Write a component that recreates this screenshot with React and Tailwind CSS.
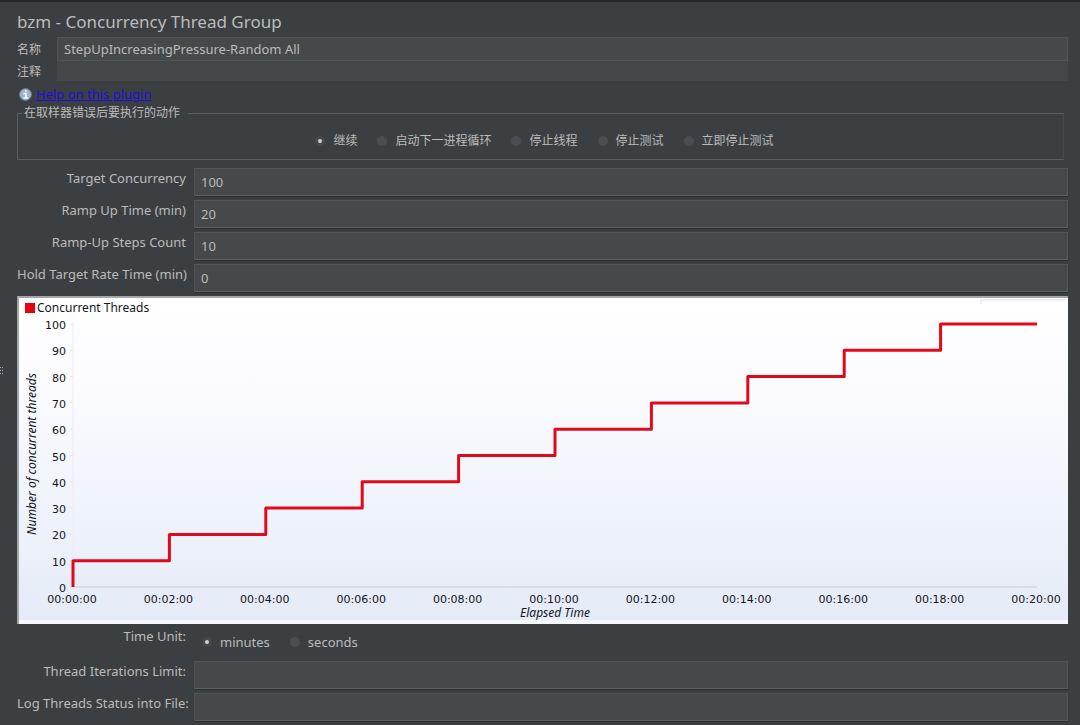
import React, { useState } from "react";

const errorActions = [
  { value: "continue", label: "继续" },
  { value: "startnextloop", label: "启动下一进程循环" },
  { value: "stopthread", label: "停止线程" },
  { value: "stoptest", label: "停止测试" },
  { value: "stoptestnow", label: "立即停止测试" },
];

const fieldClass =
  "w-full min-w-0 bg-[#45494a] border border-[#505556] px-1.5 text-[13px] text-[#bbbbbb] outline-none";

const Radio = ({ name, value, label, checked, onChange }) => (
  <label className="flex items-center gap-2">
    <input
      type="radio"
      name={name}
      value={value}
      checked={checked}
      onChange={() => onChange(value)}
      className="appearance-none size-2.5 rounded-full bg-[#4a4e51] checked:border-3 checked:border-[#45494c] checked:bg-[#d0d0d0]"
    />
    <span>{label}</span>
  </label>
);

const FieldRow = ({ id, label, value, onChange }) => (
  <div className="grid grid-cols-[171px_1fr] gap-1.5 h-8 text-[13px]">
    <label htmlFor={id} className="text-right whitespace-nowrap pt-0.5 pr-0.5 leading-4">
      {label}
    </label>
    <input
      id={id}
      type="text"
      value={value}
      onChange={(e) => onChange(e.target.value)}
      className={`${fieldClass} h-7 border-b-[#5c6062] shadow-[0_1px_1px_#2d2f31]`}
    />
  </div>
);

// Plot area inside the 1051 x 328 chart
const plot = { left: 56, right: 1020, top: 28, bottom: 291 };

const ThreadsChart = ({ target, minutes, steps }) => {
  const x = (m) => plot.left + ((plot.right - plot.left) * m) / minutes;
  const y = (n) => plot.bottom - ((plot.bottom - plot.top) * n) / target;

  let path = `M${x(0)} ${y(0)}`;
  for (let i = 1; i <= steps; i++) {
    path += ` V${y((target / steps) * i)} H${x((minutes / steps) * i)}`;
  }

  const ticks = Array.from({ length: 11 }, (_, i) => i);

  return (
    <svg viewBox="0 0 1051 328" className="block w-full" fontSize="12" fill="#15151c">
      <defs>
        <linearGradient id="chartBg" x1="0" y1="0" x2="0" y2="1">
          <stop offset="0" stopColor="#ffffff" />
          <stop offset="0.25" stopColor="#fcfcff" />
          <stop offset="1" stopColor="#e4ebf7" />
        </linearGradient>
      </defs>
      <rect width="1051" height="328" fill="url(#chartBg)" />
      <path d="M1 328V1H1051" fill="none" stroke="#a4a7a9" strokeWidth="2" />
      <path d="M2 326H1051" stroke="#f6f8fd" strokeWidth="4" />
      <path d="M964 8V4H1048" fill="none" stroke="#dddde2" />

      <rect x="8" y="7" width="10" height="10" fill="#e60012" />
      <text x="20" y="16">Concurrent Threads</text>

      <g fontSize="11" className="font-['DejaVu_Sans',sans-serif]">
        {ticks.map((i) => (
          <g key={i}>
            <path d={`M${plot.left - 3} ${y(i * 10)}h3`} stroke="#e0e2ea" />
            <text x="49" y={y(i * 10) + 5} textAnchor="end">{i * 10}</text>
            <text x={x(i * 2) - 1} y="307" textAnchor="middle">
              {`00:${String(i * 2).padStart(2, "0")}:00`}
            </text>
          </g>
        ))}
      </g>
      <path d={`M${plot.left} ${plot.top}V${plot.bottom}`} stroke="#eceef4" />
      <path d={`M${plot.left} ${plot.bottom}H${plot.right}`} stroke="#c9ccd6" />
      <path d={path} fill="none" stroke="#e00a1c" strokeWidth="3" strokeLinejoin="round" />

      <text x="538" y="321" textAnchor="middle" fontStyle="italic">Elapsed Time</text>
      <text transform="translate(19 158) rotate(-90)" textAnchor="middle" fontStyle="italic">
        Number of concurrent threads
      </text>
    </svg>
  );
};

const App = () => {
  const [name, setName] = useState("StepUpIncreasingPressure-Random All");
  const [comments, setComments] = useState("");
  const [action, setAction] = useState("continue");
  const [concurrency, setConcurrency] = useState("100");
  const [rampUp, setRampUp] = useState("20");
  const [steps, setSteps] = useState("10");
  const [hold, setHold] = useState("0");
  const [unit, setUnit] = useState("minutes");
  const [iterations, setIterations] = useState("");
  const [logFile, setLogFile] = useState("");

  return (
    <div className="relative min-h-screen overflow-hidden bg-[#3c3f41] border-t-2 border-[#26282a] pl-[17px] pr-3 text-xs text-[#bbbbbb] font-['Noto_Sans','Noto_Sans_CJK_SC',sans-serif]">
      {/* Splitter grip */}
      <svg className="absolute left-0 top-[364px]" width="4" height="12" fill="#a9acad">
        <path d="M0 1h1v1H0zM2 1h1v1H2zM0 4h1v1H0zM2 4h1v1H2zM0 7h1v1H0zM2 7h1v1H2z" />
      </svg>

      <h1 className="pt-2 h-[35px] text-[17px] leading-6">bzm - Concurrency Thread Group</h1>

      <div className="grid grid-cols-[30px_1fr] gap-x-2.5 items-center">
        <label htmlFor="name" className="pt-0.5">名称</label>
        <input id="name" type="text" value={name} onChange={(e) => setName(e.target.value)} className={`${fieldClass} h-6`} />
        <label htmlFor="comments" className="pt-0.5">注释</label>
        <input
          id="comments"
          type="text"
          value={comments}
          onChange={(e) => setComments(e.target.value)}
          className="w-full h-5 bg-[#434748] px-1.5 outline-none"
        />
      </div>

      <div className="flex items-center gap-1 h-6 pl-0.5 pt-0.5 text-[13px] leading-4">
        <svg width="13" height="13" viewBox="0 0 13 13">
          <circle cx="6.500" cy="6.500" r="6" fill="#9cb4cf" stroke="#60748c" />
          <path d="M4.500 5.500h2.500v4.500M4.500 10h4.500M6 3h1.500" fill="none" stroke="#ffffff" strokeWidth="1.500" />
        </svg>
        <a href="#help" className="text-[#1d0fdc] underline">Help on this plugin</a>
      </div>

      <fieldset className="mr-1 border border-[#5a5e60] border-r-[#44484a] h-[55px] mb-2">
        <legend className="ml-1 px-0.5 pr-2 leading-4">在取样器错误后要执行的动作</legend>
        <div className="flex justify-center gap-5 pl-2 pt-2.5 leading-5">
          {errorActions.map((a) => (
            <Radio key={a.value} name="action" value={a.value} label={a.label} checked={action === a.value} onChange={setAction} />
          ))}
        </div>
      </fieldset>

      <FieldRow id="concurrency" label="Target Concurrency" value={concurrency} onChange={setConcurrency} />
      <FieldRow id="rampUp" label="Ramp Up Time (min)" value={rampUp} onChange={setRampUp} />
      <FieldRow id="steps" label="Ramp-Up Steps Count" value={steps} onChange={setSteps} />
      <FieldRow id="hold" label="Hold Target Rate Time (min)" value={hold} onChange={setHold} />

      <ThreadsChart target={100} minutes={20} steps={10} />

      <div className="grid grid-cols-[171px_1fr] gap-1.5 h-[37px] text-[13px]">
        <span id="unitLabel" className="text-right pt-1 pr-0.5 leading-4">Time Unit:</span>
        <div role="radiogroup" aria-labelledby="unitLabel" className="flex items-center gap-5 pl-2">
          <Radio name="unit" value="minutes" label="minutes" checked={unit === "minutes"} onChange={setUnit} />
          <Radio name="unit" value="seconds" label="seconds" checked={unit === "seconds"} onChange={setUnit} />
        </div>
      </div>
      <FieldRow id="iterations" label="Thread Iterations Limit:" value={iterations} onChange={setIterations} />
      <FieldRow id="logFile" label="Log Threads Status into File:" value={logFile} onChange={setLogFile} />
    </div>
  );
};

export default App;
